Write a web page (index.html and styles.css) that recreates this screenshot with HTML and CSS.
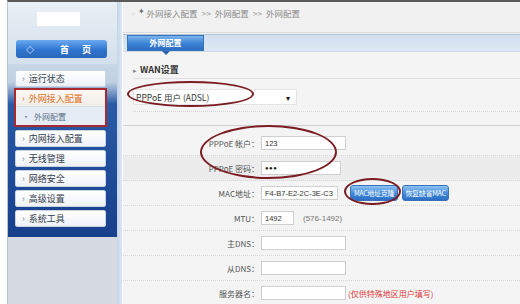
FILE: index.html
```html
<!DOCTYPE html>
<html lang="zh">
<head>
<meta charset="utf-8">
<link rel="stylesheet" href="styles.css">
</head>
<body>
<div class="frame">
  <aside class="side">
    <div class="logo"></div>
    <div class="home"><span class="dia">◇</span><span class="ht">首　页</span></div>
    <div class="menu">
      <div class="item"><span class="ar">›</span>运行状态</div>
      <div class="group">
        <div class="item active"><span class="ar">›</span>外网接入配置</div>
        <div class="sub"><span class="dot">•</span>外网配置</div>
      </div>
      <div class="item"><span class="ar">›</span>内网接入配置</div>
      <div class="item"><span class="ar">›</span>无线管理</div>
      <div class="item"><span class="ar">›</span>网络安全</div>
      <div class="item"><span class="ar">›</span>高级设置</div>
      <div class="item"><span class="ar">›</span>系统工具</div>
    </div>
  </aside>
  <div class="divider"></div>
  <main class="main">
    <div class="crumb"><span class="star">◦<b>✦</b></span>外网接入配置 <span class="sep">&gt;&gt;</span> 外网配置 <span class="sep">&gt;&gt;</span> 外网配置</div>
    <div class="tabs"><div class="tab">外网配置<span class="tri"></span></div></div>
    <div class="content">
      <div class="sect"><span class="bul">▸</span>WAN设置</div>
      <div class="selrow"><div class="select"><span>PPPoE 用户 (ADSL)</span><span class="caret">▾</span></div></div>
      <div class="gap"></div>
      <div class="form">
        <div class="row"><label>PPPoE 帐户：</label><span class="inp w85">123</span></div>
        <div class="row alt"><label>PPPoE 密码：</label><span class="inp w80 pw">●●●</span></div>
        <div class="row"><label>MAC地址：</label><span class="inp w77">F4-B7-E2-2C-3E-C3</span><span class="btn b1">MAC地址克隆</span><span class="btn b2">恢复缺省MAC</span></div>
        <div class="row"><label>MTU：</label><span class="inp w33">1492</span><span class="hint">(576-1492)</span></div>
        <div class="row"><label>主DNS：</label><span class="inp w85"></span></div>
        <div class="row"><label>从DNS：</label><span class="inp w85"></span></div>
        <div class="row"><label>服务器名：</label><span class="inp w85"></span><span class="warn">(仅供特殊地区用户填写)</span></div>
      </div>
    </div>
    <div class="ring r1"></div>
    <div class="ring r2"></div>
    <div class="ring r3"></div>
  </main>
</div>
</body>
</html>
```
FILE: styles.css
```css
* { box-sizing: border-box; }
html, body { margin: 0; padding: 0; }
body {
  width: 520px; height: 304px; overflow: hidden;
  background: #ffffff;
  font-family: "Liberation Sans", "Noto Sans CJK SC", sans-serif;
  font-size: 9px; color: #444;
}
.frame {
  display: flex; height: 304px;
  margin-left: 7px;
  border-top: 2px solid #5a5a5a;
  border-left: 1px solid #b8c4d0;
}
.side {
  width: 109px; flex: none;
  display: flex; flex-direction: column;
  background: linear-gradient(#e9eff5 0, #d4e0ec 60px, #d6dbe2 240px);
}
.logo {
  width: 43px; height: 14px; margin: 10px 0 0 29px; flex: none;
  background: #fff;
}
.home {
  margin: 14px 0 0 8px; width: 91px; height: 18px; flex: none;
  border-radius: 3px;
  background: linear-gradient(#6aaaf0, #2f75d0 55%, #2a66bb);
  color: #fff; display: flex; align-items: center;
  font-family: "Noto Sans CJK SC", sans-serif; font-size: 9px; font-weight: bold;
}
.home .dia { margin-left: 10px; font-size: 8px; }
.home .ht { margin-left: 26px; letter-spacing: 2px; }
.menu {
  margin-top: 6px; height: 173px; flex: none;
  padding: 6px 0 0 7px;
  display: flex; flex-direction: column; gap: 3px;
  background: linear-gradient(#c9d7e6 0, #c0d0e2 18px, #2a5aa6 40px, #173f8c 100%);
}
.item {
  width: 91px; height: 17px; flex: none;
  display: flex; align-items: center;
  background: linear-gradient(#ffffff, #eef2f8);
  border: 1px solid #c8d4e4; border-radius: 2px;
  font-family: "Noto Sans CJK SC", sans-serif; font-size: 9px; color: #34404e;
}
.ar { color: #7a8796; margin: 0 4px 0 6px; font-size: 9px; }
.group {
  width: 93px; margin-left: -1px; margin-top: -2px; flex: none;
  border: 2px solid #a82a2e;
  background: #eef1f6;
}
.group .item { width: 89px; border: none; border-radius: 0; border-bottom: 1px solid #d8dde6; background: linear-gradient(#fbf7f4, #f1ede8); color: #e0701c; height: 17px; }
.group .item .ar { color: #e0701c; }
.sub {
  height: 18px; display: flex; align-items: center;
  background: #e6ecf5;
  font-family: "Noto Sans CJK SC", sans-serif; font-size: 8px; color: #5a6c88;
}
.dot { margin: 0 4px 0 6px; color: #3a5a8a; }
.divider {
  width: 6px; flex: none;
  background: linear-gradient(90deg, #c2d4e8, #dde8f4);
  border-right: 1px solid #ffffff;
}
.main {
  flex: 1; position: relative;
  background: #f4f4f4;
  display: flex; flex-direction: column;
}
.crumb {
  height: 31px; padding: 5px 0 0 6px; flex: none;
  background: #f1f1f1;
  border-bottom: 1px solid #dcdcdc;
  font-family: "Noto Sans CJK SC", sans-serif; font-size: 8.5px; color: #8a8a8a;
}
.star { color: #b0b0b0; margin-right: 2px; }
.star b { color: #6a6a6a; font-weight: normal; font-size: 8px; position: relative; top: -3px; }
.sep { color: #a0a0a0; margin: 0 2px; }
.tabs {
  height: 18px; margin-top: 1px; flex: none;
  background: linear-gradient(#d2dff0, #dfe8f4);
  border-top: 1px solid #b4c4d8;
  border-bottom: 1px solid #cfd8e4;
  padding-left: 4px;
}
.tab {
  position: relative;
  width: 77px; height: 16px;
  background: linear-gradient(#7ab4ec, #3f86d6 50%, #2a6cc2);
  border: 1px solid #3a74b8;
  color: #fff; text-align: center; line-height: 14px;
  font-family: "Noto Sans CJK SC", sans-serif; font-size: 8px; font-weight: bold;
}
.tri {
  position: absolute; left: 34px; top: 15px;
  border-left: 4px solid transparent; border-right: 4px solid transparent;
  border-top: 4px solid #2a62ad;
}
.content { padding-left: 10px; }
.sect {
  height: 27px; padding-top: 11px;
  border-bottom: 1px solid #e0e0e0;
  font-family: "Noto Sans CJK SC", sans-serif; font-size: 9px; font-weight: bold; color: #333;
}
.bul { color: #888; font-size: 7px; margin-right: 3px; font-weight: normal; }
.selrow { height: 33px; padding-top: 10px; border-bottom: 1px dotted #d4d4d4; }
.select {
  width: 164px; height: 16px;
  background: #fff; border: 1px solid #e4e4e4;
  display: flex; align-items: center; justify-content: space-between;
  padding: 0 6px 0 2px;
  font-family: "Noto Sans CJK SC", sans-serif; font-size: 8.5px; color: #333;
}
.caret { font-size: 8px; color: #222; }
.gap { height: 14px; border-bottom: 1px solid #cfcfcf; margin-left: -10px; }
.form { padding-top: 5px; margin-left: -10px; }
.row {
  height: 25px; display: flex; align-items: center;
  border-bottom: 1px dotted #d6d6d6;
}
.row.alt { background: #ececec; }
.row label {
  width: 138px; flex: none; text-align: right; padding-right: 2px;
  font-family: "Noto Sans CJK SC", sans-serif; font-size: 8px; color: #555;
}
.inp {
  height: 14px; background: #fff; border: 1px solid #cfcfcf;
  display: flex; align-items: center; padding-left: 3px;
  font-size: 7.5px; color: #333; flex: none;
}
.pw { font-size: 6px; letter-spacing: 0.5px; color: #222; }
.w85 { width: 85px; } .w80 { width: 80px; } .w77 { width: 77px; } .w33 { width: 33px; }
.btn {
  height: 16px; border-radius: 3px; flex: none; white-space: nowrap; overflow: hidden;
  background: linear-gradient(#8cc2f2, #3f88d8 55%, #2c6ec4);
  border: 1px solid #3a72b8;
  color: #fff; font-family: "Noto Sans CJK SC", sans-serif; font-size: 7px; letter-spacing: -0.3px;
  display: flex; align-items: center; justify-content: center;
}
.b1 { width: 48px; margin-left: 12px; }
.b2 { width: 47px; margin-left: 4px; }
.hint { margin-left: 9px; font-size: 8px; color: #777; }
.warn { margin-left: 2px; font-family: "Noto Sans CJK SC", sans-serif; font-size: 8px; color: #e03a3a; }
.ring {
  position: absolute; border: 2px solid #7a1c22; border-radius: 50%;
}
.r1 { left: 4px; top: 79px; width: 127px; height: 26px; }
.r2 { left: 77px; top: 123px; width: 137px; height: 54px; }
.r3 { left: 221px; top: 176px; width: 57px; height: 27px; }
```
